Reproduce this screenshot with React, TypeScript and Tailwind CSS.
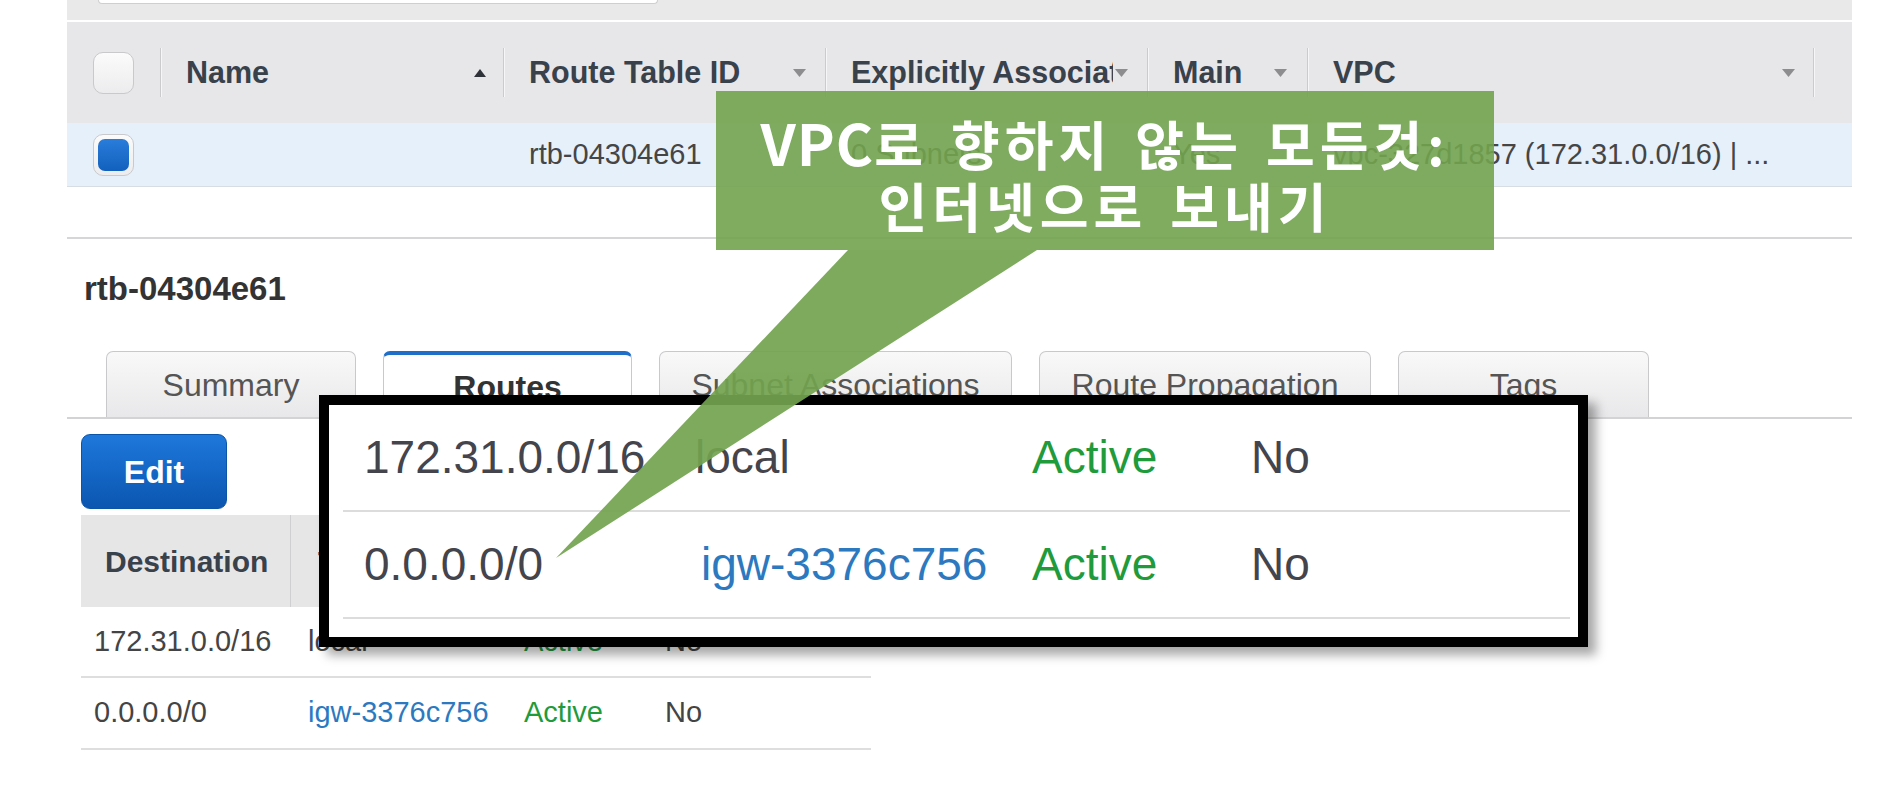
import React from "react";

function Checkbox({ checked = false }: { checked?: boolean }) {
  return (
    <div className="w-[41px] h-[42px] rounded-[10px] border border-[#c9c9cc] bg-linear-to-b from-[#fbfbfb] to-[#ececee] flex items-center justify-center">
      {checked && (
        <div className="w-[31px] h-[32px] rounded-[7px] bg-linear-to-b from-[#2a7ddb] to-[#1160bd]" />
      )}
    </div>
  );
}

function Sep() {
  return <div className="w-px h-[49px] bg-[#cbcbce] shadow-[1px_0_0_#f6f6f8]" />;
}

function Down() {
  return (
    <svg width="13" height="8" viewBox="0 0 13 8" className="shrink-0">
      <polygon points="0,0 13,0 6.5,8" fill="#8d8d90" />
    </svg>
  );
}

function Up() {
  return (
    <svg width="12" height="8" viewBox="0 0 12 8" className="shrink-0">
      <polygon points="0,8 12,8 6,0" fill="#2f3339" />
    </svg>
  );
}

function HeaderCell({
  w,
  label,
  up = false,
  pr,
}: {
  w: string;
  label: string;
  up?: boolean;
  pr: string;
}) {
  return (
    <div className={`${w} ${pr} h-full flex items-center pl-[25px] gap-[2px]`}>
      <span className="flex-1 min-w-0 overflow-hidden whitespace-nowrap">{label}</span>
      {up ? <Up /> : <Down />}
    </div>
  );
}

export default function App() {
  return (
    <div className="relative w-[1886px] h-[810px] overflow-hidden bg-white font-['Liberation_Sans',Arial,sans-serif] text-[#444]">
      <div className="ml-[67px] w-[1785px]">
        {/* top band with search box bottom */}
        <div className="h-[20px] bg-[#e9e9ea]">
          <div className="ml-[31px] w-[560px] h-[4px] bg-white rounded-b-[12px] border-x border-b border-[#cfcfd1]" />
        </div>
        <div className="h-[2px] bg-white" />

        {/* table header */}
        <div className="h-[101px] bg-[#e7e6e9] flex items-center text-[30.5px] font-bold text-[#39414b]">
          <div className="w-[93px] pl-[26px] flex items-center">
            <Checkbox />
          </div>
          <Sep />
          <HeaderCell w="w-[342px]" label="Name" up pr="pr-[17px]" />
          <Sep />
          <HeaderCell w="w-[321px]" label="Route Table ID" pr="pr-[19px]" />
          <Sep />
          <HeaderCell w="w-[321px]" label="Explicitly Associated With" pr="pr-[19px]" />
          <Sep />
          <HeaderCell w="w-[159px]" label="Main" pr="pr-[20px]" />
          <Sep />
          <HeaderCell w="w-[505px]" label="VPC" pr="pr-[18px]" />
          <Sep />
          <div className="w-[38px]" />
        </div>

        {/* selected row */}
        <div className="h-[64px] bg-[#e6f0fb] border-b border-[#d8dde3] flex items-center text-[29px] text-[#454545] whitespace-nowrap">
          <div className="w-[93px] pl-[26px] flex items-center">
            <Checkbox checked />
          </div>
          <div className="w-px" />
          <div className="w-[342px] pl-[25px]" />
          <div className="w-px" />
          <div className="w-[321px] pl-[25px]">rtb-04304e61</div>
          <div className="w-px" />
          <div className="w-[321px] pl-[25px]">0 Subnets</div>
          <div className="w-px" />
          <div className="w-[159px] pl-[25px]">Yes</div>
          <div className="w-px" />
          <div className="w-[505px] pl-[25px]">vpc-327d1857 (172.31.0.0/16) | ...</div>
        </div>

        <div className="h-[50px]" />
        <div className="h-[2px] bg-[#d6d6d8]" />

        {/* detail title */}
        <div className="mt-[31px] ml-[17px] leading-[38px] text-[33px] font-bold text-[#333]">rtb-04304e61</div>

        {/* tabs */}
        <div className="mt-[43px] h-[68px] flex items-end pl-[39px] gap-[27px] border-b-2 border-[#d3d3d5] text-[32px] text-[#555]">
          <div className="w-[250px] h-[66px] rounded-t-[7px] border border-b-0 border-[#c9c9cb] bg-linear-to-b from-[#f9f9f9] to-[#e8e8ea] flex items-center justify-center">
            Summary
          </div>
          <div className="w-[249px] h-[68px] -mb-[2px] rounded-t-[7px] border border-b-0 border-[#c9c9cb] border-t-[4px] border-t-[#1f6fc9] bg-white flex items-center justify-center font-bold text-[#333]">
            Routes
          </div>
          <div className="w-[353px] h-[66px] rounded-t-[7px] border border-b-0 border-[#c9c9cb] bg-linear-to-b from-[#f9f9f9] to-[#e8e8ea] flex items-center justify-center">
            Subnet Associations
          </div>
          <div className="w-[332px] h-[66px] rounded-t-[7px] border border-b-0 border-[#c9c9cb] bg-linear-to-b from-[#f9f9f9] to-[#e8e8ea] flex items-center justify-center">
            Route Propagation
          </div>
          <div className="w-[251px] h-[66px] rounded-t-[7px] border border-b-0 border-[#c9c9cb] bg-linear-to-b from-[#f9f9f9] to-[#e8e8ea] flex items-center justify-center">
            Tags
          </div>
        </div>

        {/* Edit button */}
        <div className="mt-[15px] ml-[14px] w-[146px] h-[75px] rounded-[9px] bg-linear-to-b from-[#1e78db] to-[#0a56b0] border border-[#0b55a8] flex items-center justify-center text-white font-bold text-[32px]">
          Edit
        </div>

        {/* routes table */}
        <div className="mt-[6px] ml-[14px] w-[790px] text-[29px]">
          <div className="h-[92px] bg-[#e6e6e7] flex items-stretch font-bold text-[30px] text-[#39414b]">
            <div className="w-[210px] pl-[24px] flex items-center border-r border-[#cfcfd1]">Destination</div>
            <div className="w-[219px] pl-[27px] flex items-center border-r border-[#cfcfd1]">Target</div>
            <div className="w-[141px] pl-[24px] flex items-center border-r border-[#cfcfd1]">Status</div>
            <div className="flex-1 pl-[24px] flex items-center">Propagated</div>
          </div>
          <div className="h-[71px] border-b-2 border-[#dedede] flex items-center whitespace-nowrap">
            <div className="w-[213px] pl-[13px]">172.31.0.0/16</div>
            <div className="w-[216px] pl-[14px]">local</div>
            <div className="w-[141px] pl-[14px] text-[#1f9b3c]">Active</div>
            <div className="flex-1 pl-[14px]">No</div>
          </div>
          <div className="h-[72px] border-b-2 border-[#dedede] flex items-center whitespace-nowrap">
            <div className="w-[213px] pl-[13px]">0.0.0.0/0</div>
            <div className="w-[216px] pl-[14px] text-[#2c79bf]">igw-3376c756</div>
            <div className="w-[141px] pl-[14px] text-[#1f9b3c]">Active</div>
            <div className="flex-1 pl-[14px]">No</div>
          </div>
        </div>
      </div>

      {/* magnified inset */}
      <div className="absolute left-[319px] top-[395px] w-[1269px] h-[252px] border-[10px] border-black bg-white shadow-[8px_8px_10px_rgba(0,0,0,0.35)] text-[46px] text-[#44444c] whitespace-nowrap">
        <div className="ml-[14px] mr-[8px] h-[107px] border-b-2 border-[#dcdcdc] flex items-center pl-[21px]">
          <div className="w-[333px]">172.31.0.0/16</div>
          <div className="w-[335px] -ml-[2px]">local</div>
          <div className="w-[219px] ml-[2px] text-[#1f9b3c]">Active</div>
          <div>No</div>
        </div>
        <div className="ml-[14px] mr-[8px] h-[107px] border-b-2 border-[#dcdcdc] flex items-center pl-[21px]">
          <div className="w-[333px]">0.0.0.0/0</div>
          <div className="w-[335px] pl-[4px] text-[#2c79bf]">igw-3376c756</div>
          <div className="w-[219px] text-[#1f9b3c]">Active</div>
          <div>No</div>
        </div>
      </div>

      {/* callout */}
      <div className="absolute left-[716px] top-[91px] w-[778px] h-[159px] bg-[#72a34e]/90 pt-[19px] text-center text-white font-bold text-[53px] leading-[62px] tracking-[5px] [word-spacing:6px] font-['Noto_Sans_CJK_KR','Noto_Sans_CJK_SC',sans-serif] whitespace-nowrap">
        <div>
          <span className="text-[57px] tracking-[1px]">VPC</span>로 향하지 않는 모든것:
        </div>
        <div>인터넷으로 보내기</div>
      </div>
      <svg
        className="absolute left-[550px] top-[250px]"
        width="500"
        height="312"
        viewBox="0 0 500 312"
      >
        <polygon points="298,0 487,0 6,308" fill="#72a34e" fillOpacity="0.92" />
      </svg>
    </div>
  );
}
